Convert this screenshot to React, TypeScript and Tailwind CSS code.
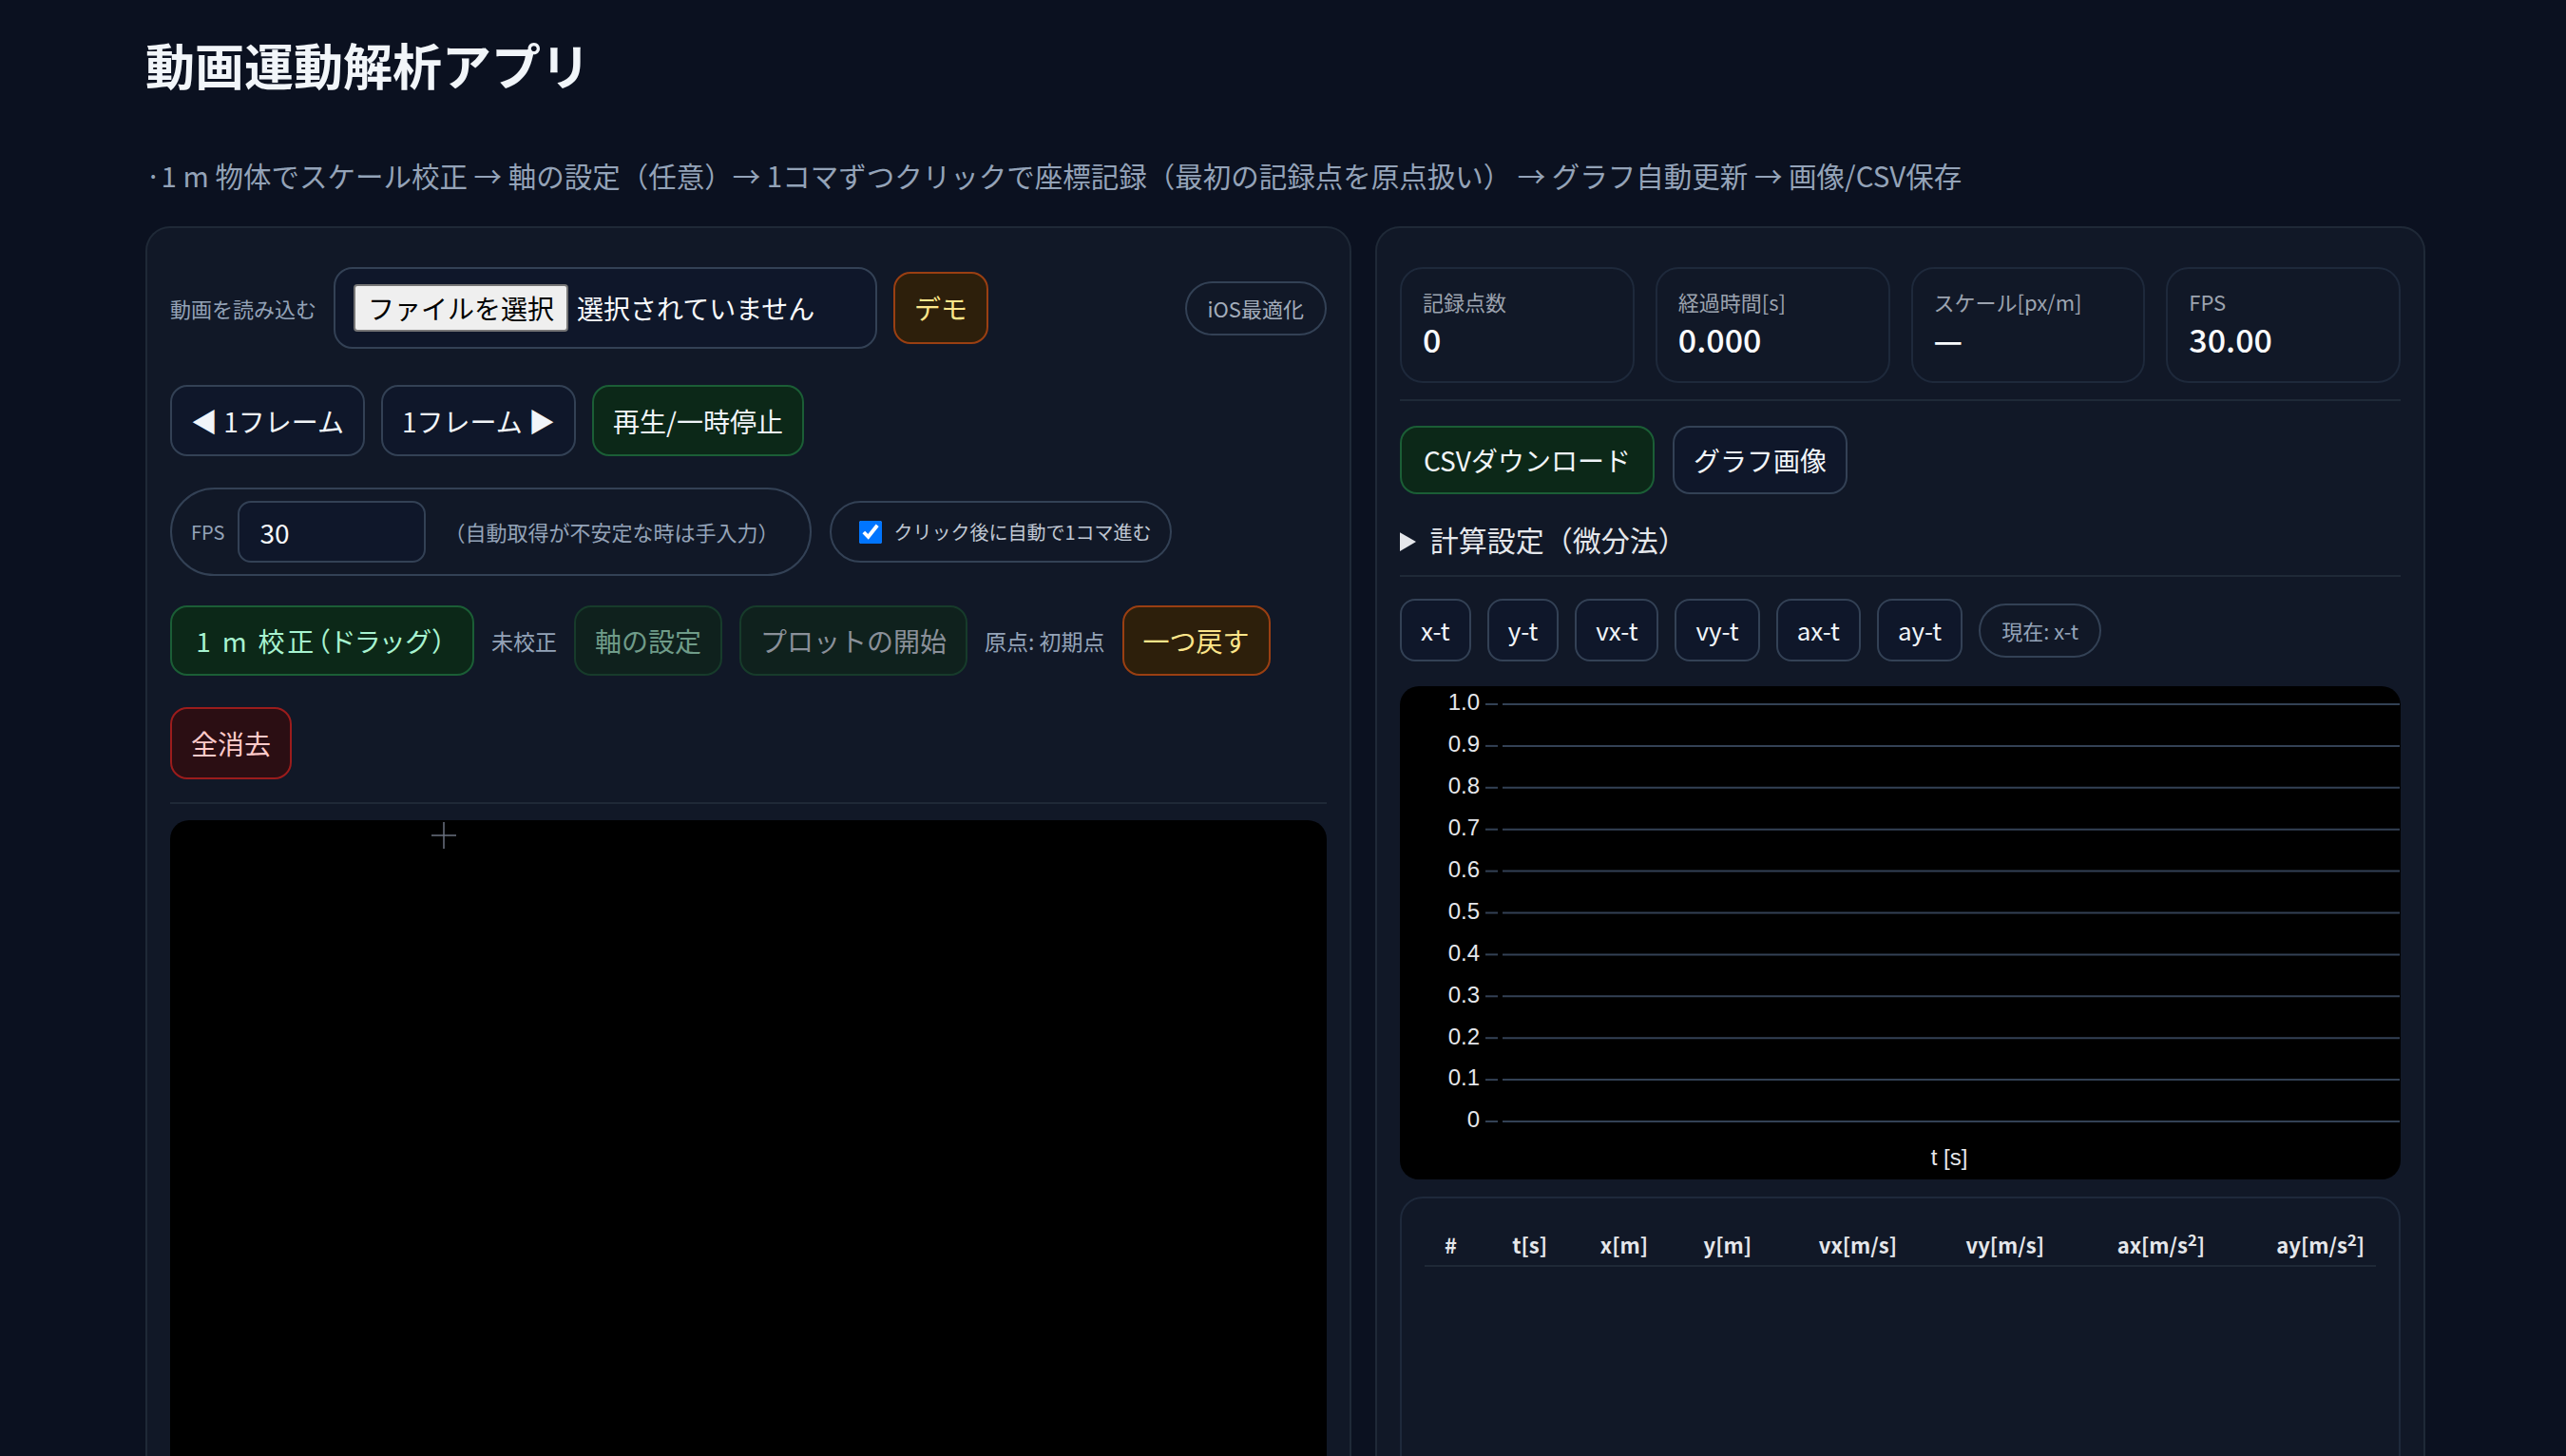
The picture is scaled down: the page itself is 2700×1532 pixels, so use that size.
import React from 'react';

type Tone = 'base' | 'green' | 'mint' | 'dim' | 'dimGray' | 'amber' | 'red';

const TONES: Record<Tone, string> = {
  base: 'bg-[#0f172a] border-[#334155] text-[#f1f5f9]',
  green: 'bg-[#0c2818] border-[#1b5e36] text-[#f1f5f9]',
  mint: 'bg-[#0c2818] border-[#1b5e36] text-[#a7f3d0]',
  dim: 'bg-[#0f211d] border-[#173b2b] text-[#6f9c89]',
  dimGray: 'bg-[#0f211d] border-[#173b2b] text-[#8a9099]',
  amber: 'bg-[#2d1f0b] border-[#9a3f12] text-[#fde68a]',
  red: 'bg-[#2b0e13] border-[#9b1c1c] text-[#fecaca]',
};

function Btn({
  tone = 'base',
  h = 'h-[75px]',
  className = '',
  children,
}: {
  tone?: Tone;
  h?: string;
  className?: string;
  children: React.ReactNode;
}) {
  return (
    <button
      type="button"
      className={`flex ${h} shrink-0 items-center justify-center whitespace-nowrap rounded-[18px] border-2 px-[20px] text-[28px] leading-none ${TONES[tone]} ${className}`}
    >
      {children}
    </button>
  );
}

function Tab({ children }: { children: React.ReactNode }) {
  return (
    <button
      type="button"
      className="flex h-[66px] items-center rounded-[16px] border-2 border-[#334155] bg-[#0f172a] px-[20px] text-[26px] leading-none text-[#f1f5f9]"
    >
      {children}
    </button>
  );
}

const stats = [
  { label: '記録点数', value: '0' },
  { label: '経過時間[s]', value: '0.000' },
  { label: 'スケール[px/m]', value: '—' },
  { label: 'FPS', value: '30.00' },
];

const ticks = ['1.0', '0.9', '0.8', '0.7', '0.6', '0.5', '0.4', '0.3', '0.2', '0.1', '0'];

function Chart() {
  return (
    <svg width="1052" height="519" viewBox="0 0 1052 519" className="block">
      {ticks.map((t, i) => {
        const y = 19 + i * 43.9;
        return (
          <g key={t}>
            <text x="84" y={y} textAnchor="end" dominantBaseline="middle" fontFamily="Liberation Sans, Arial, sans-serif" fontSize="24" fill="#e5e7eb">
              {t}
            </text>
            <line x1="90" x2="103" y1={y} y2={y} stroke="#334155" strokeWidth="2" />
            <line x1="108" x2="1052" y1={y} y2={y} stroke="#334155" strokeWidth="2" />
          </g>
        );
      })}
      <text x="578" y="498" textAnchor="middle" dominantBaseline="middle" fontFamily="Liberation Sans, Arial, sans-serif" fontSize="24" fill="#e5e7eb">
        t [s]
      </text>
    </svg>
  );
}

const cols = [
  { w: 46, label: <>#</> },
  { w: 95, label: <>t[s]</> },
  { w: 106, label: <>x[m]</> },
  { w: 109, label: <>y[m]</> },
  { w: 153, label: <>vx[m/s]</> },
  { w: 155, label: <>vy[m/s]</> },
  { w: 169, label: <>ax[m/s<sup>2</sup>]</> },
  { w: 168, label: <>ay[m/s<sup>2</sup>]</> },
];

export default function App() {
  return (
    <div className="min-h-screen bg-[#0b1120] pb-[60px] pl-[153px] pr-[148px] pt-[34px] font-['Noto_Sans_CJK_JP','Noto_Sans',sans-serif]">
      <h1 className="text-[52px] font-bold leading-[68px] text-[#f1f5f9]">動画運動解析アプリ</h1>
      <p className="mt-[62px] whitespace-nowrap text-[29.5px] leading-[40px] text-[#94a3b8]">
        ·1 m 物体でスケール校正 → 軸の設定（任意）→ 1コマずつクリックで座標記録（最初の記録点を原点扱い） → グラフ自動更新 → 画像/CSV保存
      </p>

      <div className="mt-[34px] grid grid-cols-[1270fr_1104fr] items-start gap-[25px]">
        {/* left: video + controls */}
        <section className="flex flex-col rounded-[26px] border-2 border-[#1f2937] bg-[#111827] px-[24px] pb-[40px] pt-[41px]">
          <div className="flex h-[86px] items-center">
            <span className="text-[22px] text-[#94a3b8]">動画を読み込む</span>
            <div className="ml-[18px] flex h-[86px] w-[572px] items-center gap-[9px] rounded-[20px] border-2 border-[#334155] bg-[#0f172a] px-[19px]">
              <span className="flex h-[50px] items-center rounded-[4px] border-2 border-[#767676] bg-[#efefef] px-[13px] text-[28px] leading-none text-black">
                ファイルを選択
              </span>
              <span className="text-[28px] text-[#f8fafc]">選択されていません</span>
            </div>
            <Btn tone="amber" h="h-[76px]" className="ml-[17px]">デモ</Btn>
            <button type="button" className="ml-auto h-[57px] rounded-full border-2 border-[#334155] px-[22px] text-[22px] text-[#a3adbb]">
              iOS最適化
            </button>
          </div>

          <div className="mt-[38px] flex items-center gap-[17px]">
            <Btn>◀ 1フレーム</Btn>
            <Btn>1フレーム ▶</Btn>
            <Btn tone="green">再生/一時停止</Btn>
          </div>

          <div className="mt-[33px] flex items-center">
            <div className="flex h-[93px] items-center rounded-full border-2 border-[#334155] pl-[20px] pr-[33px]">
              <span className="text-[20px] text-[#94a3b8]">FPS</span>
              <div className="ml-[14px] flex h-[65px] w-[198px] items-center rounded-[14px] border-2 border-[#334155] bg-[#0f172a] px-[21px] text-[28px] text-[#f8fafc]">
                30
              </div>
              <span className="ml-[19px] text-[22px] text-[#94a3b8]">（自動取得が不安定な時は手入力）</span>
            </div>
            <label className="ml-[19px] flex h-[65px] items-center gap-[12px] rounded-full border-2 border-[#334155] pl-[29px] pr-[19px] text-[20px] text-[#c0c8d4]">
              <input type="checkbox" defaultChecked className="h-[24px] w-[24px]" />
              クリック後に自動で1コマ進む
            </label>
          </div>

          <div className="mt-[31px] flex items-center gap-[18px]">
            <Btn tone="mint" h="h-[74px]" className="w-[320px] tracking-[0.1em] [font-feature-settings:'palt']">1 m 校正（ドラッグ）</Btn>
            <span className="text-[23px] text-[#94a3b8]">未校正</span>
            <Btn tone="dim" h="h-[74px]">軸の設定</Btn>
            <Btn tone="dimGray" h="h-[74px]">プロットの開始</Btn>
            <span className="text-[23px] text-[#94a3b8]">原点: 初期点</span>
            <Btn tone="amber" h="h-[74px]">一つ戻す</Btn>
          </div>

          <div className="mt-[33px] flex">
            <Btn tone="red" h="h-[76px]">全消去</Btn>
          </div>

          <div className="mt-[24px] h-[2px] bg-[#1f2937]" />

          <div className="relative mt-[17px] h-[760px] rounded-[20px] bg-black">
            <svg width="28" height="30" viewBox="0 0 28 30" className="absolute left-[274px] top-[1px]">
              <line x1="1" x2="27" y1="15" y2="15" stroke="#6b7280" strokeWidth="1.5" />
              <line x1="14" x2="14" y1="1" y2="29" stroke="#6b7280" strokeWidth="1.5" />
            </svg>
          </div>
        </section>

        {/* right: stats, export, chart, table */}
        <section className="flex flex-col self-stretch rounded-[26px] border-2 border-[#1f2937] bg-[#111827] px-[24px] pt-[41px]">
          <div className="grid grid-cols-4 gap-[22px]">
            {stats.map((s) => (
              <div key={s.label} className="h-[122px] rounded-[24px] border-2 border-[#1e293b] px-[22px] pt-[19px]">
                <div className="text-[22px] leading-[30px] text-[#9ca3af]">{s.label}</div>
                <div className="mt-[5px] text-[34px] font-medium leading-[40px] text-[#f8fafc]">{s.value}</div>
              </div>
            ))}
          </div>

          <div className="mt-[17px] h-[2px] bg-[#1f2937]" />

          <div className="mt-[26px] flex gap-[19px]">
            <Btn tone="green" h="h-[72px]" className="px-[23px]">CSVダウンロード</Btn>
            <Btn h="h-[72px]">グラフ画像</Btn>
          </div>

          <details className="mt-[27px]">
            <summary className="cursor-pointer text-[30px] leading-[40px] text-[#e5e7eb]">計算設定（微分法）</summary>
          </details>

          <div className="mt-[18px] h-[2px] bg-[#1f2937]" />

          <div className="mt-[23px] flex items-center gap-[17px]">
            <Tab>x-t</Tab>
            <Tab>y-t</Tab>
            <Tab>vx-t</Tab>
            <Tab>vy-t</Tab>
            <Tab>ax-t</Tab>
            <Tab>ay-t</Tab>
            <span className="flex h-[57px] items-center rounded-full border-2 border-[#334155] px-[22px] text-[22px] text-[#94a3b8]">
              現在: x-t
            </span>
          </div>

          <div className="mt-[26px] overflow-hidden rounded-[20px] bg-black">
            <Chart />
          </div>

          <div className="mt-[18px] min-h-[500px] rounded-[24px] border-2 border-[#1e293b] px-[24px] pt-[20px]">
            <table className="w-full table-fixed border-collapse">
              <colgroup>
                {cols.map((c, i) => (
                  <col key={i} style={{ width: c.w }} />
                ))}
              </colgroup>
              <thead>
                <tr className="border-b-2 border-[#1f2937]">
                  {cols.map((c, i) => (
                    <th key={i} className="pb-[6px] pr-[12px] pt-[12px] text-right text-[22px] font-bold leading-[32px] text-[#e5e7eb]">
                      {c.label}
                    </th>
                  ))}
                </tr>
              </thead>
              <tbody />
            </table>
          </div>
        </section>
      </div>
    </div>
  );
}
